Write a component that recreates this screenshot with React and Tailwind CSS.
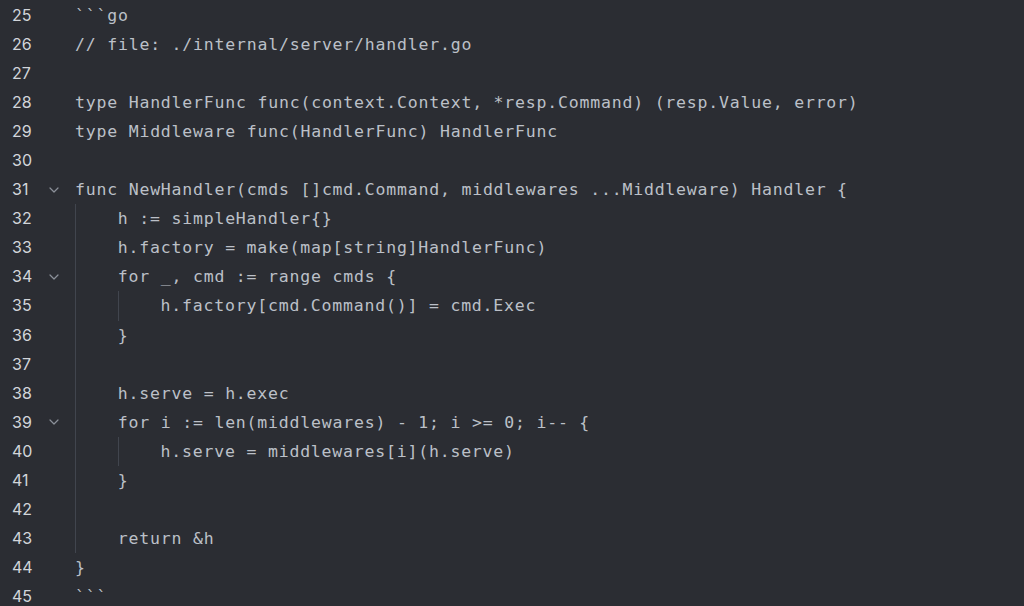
import React from "react";

const lines = [
  { n: 25, t: "```go" },
  { n: 26, t: "// file: ./internal/server/handler.go" },
  { n: 27, t: "" },
  { n: 28, t: "type HandlerFunc func(context.Context, *resp.Command) (resp.Value, error)" },
  { n: 29, t: "type Middleware func(HandlerFunc) HandlerFunc" },
  { n: 30, t: "" },
  { n: 31, t: "func NewHandler(cmds []cmd.Command, middlewares ...Middleware) Handler {", fold: true },
  { n: 32, t: "h := simpleHandler{}", g: 1 },
  { n: 33, t: "h.factory = make(map[string]HandlerFunc)", g: 1 },
  { n: 34, t: "for _, cmd := range cmds {", g: 1, fold: true },
  { n: 35, t: "h.factory[cmd.Command()] = cmd.Exec", g: 2 },
  { n: 36, t: "}", g: 1 },
  { n: 37, t: "", g: 1 },
  { n: 38, t: "h.serve = h.exec", g: 1 },
  { n: 39, t: "for i := len(middlewares) - 1; i >= 0; i-- {", g: 1, fold: true },
  { n: 40, t: "h.serve = middlewares[i](h.serve)", g: 2 },
  { n: 41, t: "}", g: 1 },
  { n: 42, t: "", g: 1 },
  { n: 43, t: "return &h", g: 1 },
  { n: 44, t: "}" },
  { n: 45, t: "```" },
];

function Chevron() {
  return (
    <svg width="10" height="6" viewBox="0 0 10 6" fill="none">
      <path d="M1 1l4 4 4-4" stroke="#8b9099" strokeWidth="1.2" strokeLinecap="round" strokeLinejoin="round" />
    </svg>
  );
}

function Guide() {
  return <div className="w-[42.8px] h-full shrink-0 border-l border-[#41454e]" />;
}

export default function App() {
  return (
    <div className="w-[1024px] h-[606px] overflow-hidden bg-[#2b2d33] pt-[1px]">
      {lines.map((l) => (
        <div key={l.n} className="flex h-[29.05px] items-stretch">
          <div
            className="w-[48px] shrink-0 pl-[12px] text-[16px] leading-[29px] text-[#d2d5da]"
            style={{ fontFamily: "Inter, 'Noto Sans', sans-serif" }}
          >
            {l.n}
          </div>
          <div className="w-[27px] shrink-0 flex items-center justify-start pl-[1px]">
            {l.fold ? <Chevron /> : null}
          </div>
          <div className="flex items-stretch">
            {l.g >= 1 ? <Guide /> : null}
            {l.g >= 2 ? <Guide /> : null}
          </div>
          <div
            className="whitespace-pre text-[16.5px] leading-[29px] tracking-[0.8px] text-[#bcc0c8]"
            style={{ fontFamily: "'DejaVu Sans Mono', monospace" }}
          >
            {l.t}
          </div>
        </div>
      ))}
    </div>
  );
}
